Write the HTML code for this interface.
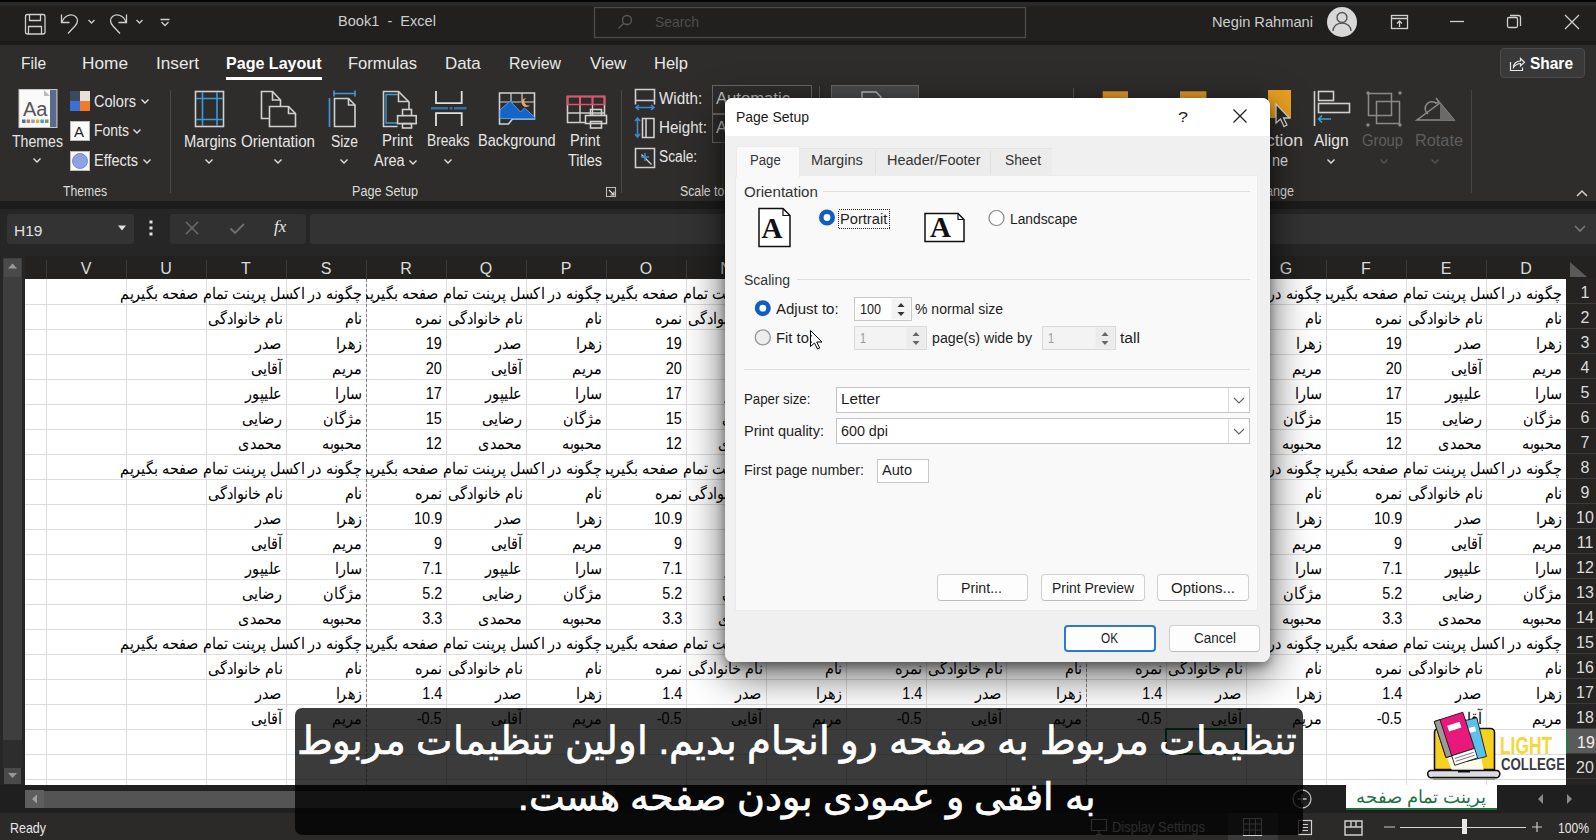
<!DOCTYPE html><html><head><meta charset="utf-8"><style>
*{margin:0;padding:0;box-sizing:border-box}
html,body{width:1596px;height:840px;overflow:hidden;background:#292929;font-family:"Liberation Sans",sans-serif;}
.a{position:absolute}
.t{position:absolute;white-space:nowrap;line-height:1}
.c{position:absolute;height:28px;overflow:hidden;white-space:nowrap;direction:rtl;text-align:right;padding-right:4px;font-size:16px;line-height:29px;color:#000}.c>i{font-style:normal;display:inline-block;transform:scaleX(0.9);transform-origin:100% 50%}
.ch{position:absolute;top:256px;height:23px;width:80px;text-align:center;color:#dcdcdc;font-size:16px;line-height:25px}
.rh{position:absolute;left:1566px;width:30px;padding-left:8px;height:25px;text-align:center;color:#dcdcdc;font-size:16px;line-height:28px;border-bottom:1px solid #3a3a3a}
</style></head><body>
<div class="a" style="left:0;top:0;width:1596px;height:45px;background:#21201f"></div><div class="a" style="left:0;top:41px;width:1596px;height:4px;background:#1c1b1a"></div>
<div class="a" style="left:0;top:0;width:1596px;height:5.5px;background:#2a2a2a"></div><div class="a" style="left:0;top:0;width:1596px;height:1.5px;background:#050505"></div>
<div class="a" style="left:0;top:45px;width:1596px;height:156px;background:#2e2d2b"></div>
<div class="a" style="left:0;top:201px;width:1596px;height:55px;background:#262626"></div><div class="a" style="left:0;top:201px;width:1596px;height:8px;background:#1c1c1c"></div>
<div class="a" style="left:0;top:256px;width:1596px;height:23px;background:#232221"></div><div class="a" style="left:1566px;top:279px;width:30px;height:506px;background:#252422"></div>
<div class="a" style="left:25px;top:279px;width:1541px;height:506px;background:#fff"></div>
<div class="a" style="left:0;top:785px;width:1596px;height:28px;background:#1f1f1f"></div>
<div class="a" style="left:0;top:813px;width:1596px;height:27px;background:#2b2a29"></div>
<svg class="a" style="left:0;top:0" width="1596" height="42" viewBox="0 0 1596 42">
<g fill="none" stroke="#cfcfcf" stroke-width="1.3">
<rect x="25.5" y="14.5" width="19.5" height="19.5" rx="2"/><path d="M29.5 14.5v6h11v-6"/><path d="M28.5 34v-7.5h13v7.5"/>
<path d="M61.5 14.5v8h8"/><path d="M62 22c2.5-6.5 9-9 13.5-5.5c3 2.5 2.5 6-0.5 9.5l-7 7.5"/>
<path d="M88.5 20l3 3 3-3"/>
<path d="M126.5 14.5v8h-8"/><path d="M126 22c-2.5-6.5-9-9-13.5-5.5c-3 2.5-2.5 6 0.5 9.5l7 7.5"/>
<path d="M136.5 20l3 3 3-3"/>
<path d="M160.5 19.5h9M161.5 22l3.5 3.5 3.5-3.5"/>
<rect x="594.5" y="7.5" width="431" height="30" stroke="#4c4c4c"/>
<circle cx="627" cy="20" r="4.5" stroke="#5a5a5a"/><path d="M623.5 23.5l-5 5" stroke="#5a5a5a"/>
<rect x="1391.5" y="15.5" width="16" height="13" stroke="#cfcfcf"/><path d="M1391.5 18.5h16M1399.5 27v-6M1397 23.5l2.5-2.5 2.5 2.5"/>
<path d="M1450 21.5h14"/>
<rect x="1507.5" y="17.5" width="10" height="10" rx="1.5"/><path d="M1510 15.5h8.5a2 2 0 0 1 2 2v8.5"/>
<path d="M1565 15l14 14M1579 15l-14 14"/>
</g>
<circle cx="1342" cy="22" r="15" fill="#d8d8d8"/>
<g fill="none" stroke="#555" stroke-width="1.4"><circle cx="1342" cy="17.5" r="5"/><path d="M1333 31a9 8 0 0 1 18 0"/></g>
</svg>
<div class="t" style="left:338px;top:13.1px;font-size:15px;color:#cdcdcd;transform-origin:0 0;transform:scaleX(0.971);white-space:pre;">Book1  -  Excel</div>
<div class="t" style="left:655px;top:14.3px;font-size:15px;color:#4e4e4e;transform-origin:0 0;transform:scaleX(0.926);white-space:pre;">Search</div>
<div class="t" style="left:1212.3px;top:14.3px;font-size:15px;color:#cdcdcd;transform-origin:0 0;transform:scaleX(0.977);white-space:pre;">Negin Rahmani</div>
<div class="t" style="left:21px;top:54.6px;font-size:17px;color:#e8e8e8;transform-origin:0 0;transform:scaleX(0.913);white-space:pre;">File</div>
<div class="t" style="left:82px;top:54.6px;font-size:17px;color:#e8e8e8;transform-origin:0 0;transform:scaleX(1.014);white-space:pre;">Home</div>
<div class="t" style="left:156px;top:54.6px;font-size:17px;color:#e8e8e8;transform-origin:0 0;transform:scaleX(1.011);white-space:pre;">Insert</div>
<div class="t" style="left:348px;top:54.6px;font-size:17px;color:#e8e8e8;transform-origin:0 0;transform:scaleX(0.974);white-space:pre;">Formulas</div>
<div class="t" style="left:445px;top:54.6px;font-size:17px;color:#e8e8e8;transform-origin:0 0;transform:scaleX(0.994);white-space:pre;">Data</div>
<div class="t" style="left:509px;top:54.6px;font-size:17px;color:#e8e8e8;transform-origin:0 0;transform:scaleX(0.933);white-space:pre;">Review</div>
<div class="t" style="left:589.7px;top:54.6px;font-size:17px;color:#e8e8e8;transform-origin:0 0;transform:scaleX(0.993);white-space:pre;">View</div>
<div class="t" style="left:654px;top:54.6px;font-size:17px;color:#e8e8e8;transform-origin:0 0;transform:scaleX(0.972);white-space:pre;">Help</div>
<div class="t" style="left:226px;top:54.6px;font-size:17px;color:#fff;transform-origin:0 0;transform:scaleX(0.945);white-space:pre;font-weight:bold;">Page Layout</div>
<div class="a" style="left:226px;top:77px;width:96px;height:3px;background:#fff"></div>
<div class="a" style="left:1500px;top:48px;width:85px;height:30px;background:#393939;border:1px solid #4a4a4a;border-radius:4px"></div>
<div class="t" style="left:1530px;top:54.6px;font-size:17px;color:#fff;transform-origin:0 0;transform:scaleX(0.910);white-space:pre;font-weight:bold;">Share</div>
<svg class="a" style="left:1508px;top:54px" width="18" height="18" viewBox="0 0 18 18"><g fill="none" stroke="#e8e8e8" stroke-width="1.2"><path d="M2.5 8v8.5h12v-3"/><path d="M5.5 13.5c0-4 3-6.5 7-6.5V4.5l4 3.8-4 3.7V9.5c-3 0-5 1.2-7 4z"/></g></svg>
<svg class="a" style="left:0;top:0" width="1270" height="205" viewBox="0 0 1270 205"><rect x="19" y="89.5" width="38" height="38" fill="#fafafa" stroke="#c8c8c8"/><path d="M50 90v37h6.5V90z" fill="#5b6a8c"/><path d="M44 90l6 6h-6z" fill="#bbb"/><text x="23" y="116" font-family="Liberation Sans" font-size="20" fill="#555">Aa</text><rect x="22.0" y="119.5" width="3.5" height="3.5" fill="#4a6fb5"/><rect x="26.6" y="119.5" width="3.5" height="3.5" fill="#c0804a"/><rect x="31.2" y="119.5" width="3.5" height="3.5" fill="#9aa0b0"/><rect x="35.8" y="119.5" width="3.5" height="3.5" fill="#e0b030"/><rect x="40.4" y="119.5" width="3.5" height="3.5" fill="#4aa0c0"/><rect x="45.0" y="119.5" width="3.5" height="3.5" fill="#7a9a60"/><path d="M33.5 158.5l3.5 3.5 3.5-3.5" stroke="#e0e0e0" stroke-width="1.4" fill="none"/><rect x="70" y="91" width="10" height="10" fill="#3c4a5e"/><rect x="80" y="91" width="10" height="10" fill="#e6e2da"/><rect x="70" y="101" width="10" height="10" fill="#3d6fd6"/><rect x="80" y="101" width="10" height="10" fill="#f07c2a"/><path d="M141.5 99.5l3.5 3.5 3.5-3.5" stroke="#e6e6e6" stroke-width="1.4" fill="none"/><rect x="70.5" y="121.5" width="19" height="19" fill="#fafafa" stroke="#bbb"/><text x="74" y="137" font-family="Liberation Sans" font-size="15" fill="#222">A</text><path d="M133.5 129.5l3.5 3.5 3.5-3.5" stroke="#e0e0e0" stroke-width="1.4" fill="none"/><rect x="70.5" y="151.5" width="19" height="19" fill="#fafafa" stroke="#bbb"/><circle cx="80" cy="161" r="7.5" fill="#8ea2e2" stroke="#7a8cd0"/><path d="M143.5 159.5l3.5 3.5 3.5-3.5" stroke="#e0e0e0" stroke-width="1.4" fill="none"/><path d="M170.5 90v103" stroke="#4a4a4a"/><rect x="195.5" y="91.5" width="28" height="35" fill="none" stroke="#d0d0d0" stroke-width="1.6"/><path d="M202.5 92v34M217 92v34M196 98.5h27M196 119.5h27" fill="none" stroke="#3a9be0" stroke-width="1.6"/><path d="M205.5 159.5l3.5 3.5 3.5-3.5" stroke="#e0e0e0" stroke-width="1.4" fill="none"/><path d="M269.5 118.5h-8v-27h11l8 8.5v6.5" fill="none" stroke="#d0d0d0" stroke-width="1.6"/><path d="M272.5 91.5v8.5h8" fill="none" stroke="#d0d0d0" stroke-width="1.6"/><path d="M269.5 106.5h19l7 7v13h-26z" fill="none" stroke="#d0d0d0" stroke-width="1.6"/><path d="M288.5 106.5v7h7" fill="none" stroke="#d0d0d0" stroke-width="1.6"/><path d="M274.5 159.5l3.5 3.5 3.5-3.5" stroke="#e0e0e0" stroke-width="1.4" fill="none"/><path d="M334.5 98.5h14l6.5 6.5v21.5h-20.5z" fill="none" stroke="#d0d0d0" stroke-width="1.6"/><path d="M348.5 98.5v6.5h6.5" fill="none" stroke="#d0d0d0" stroke-width="1.6"/><path d="M334 93.5h21M334 90.5v6M355 90.5v6M329.5 98v29" fill="none" stroke="#3a9be0" stroke-width="1.6"/><path d="M340.5 159.5l3.5 3.5 3.5-3.5" stroke="#e0e0e0" stroke-width="1.4" fill="none"/><path d="M397.5 126.5h-14v-35h15l10.5 10.5v7.5" fill="none" stroke="#d0d0d0" stroke-width="1.6"/><path d="M398.5 91.5v10h10.5" fill="none" stroke="#d0d0d0" stroke-width="1.6"/><path d="M398 94.5h-12v28.5h11" stroke="#3a9be0" stroke-width="1.3" fill="none"/><rect x="402.5" y="109.5" width="9" height="6.2" fill="none" stroke="#d0d0d0" stroke-width="1.6"/><rect x="397.6" y="115.7" width="18.6" height="7.9" fill="#2e2d2b" stroke="#d0d0d0" stroke-width="1.6"/><rect x="402.5" y="123.6" width="9" height="4.4" fill="none" stroke="#d0d0d0" stroke-width="1.6"/><path d="M409.5 160.5l3.5 3.5 3.5-3.5" stroke="#e0e0e0" stroke-width="1.4" fill="none"/><path d="M436 91v12.2h25.7V91M436 126v-12.8h25.7V126" fill="none" stroke="#e0e0e0" stroke-width="1.8"/><path d="M431 108.2h35.5" stroke="#2f6fa8" stroke-width="2.6" stroke-dasharray="17 1.5 3 1.5 14"/><path d="M444.5 159.5l3.5 3.5 3.5-3.5" stroke="#e0e0e0" stroke-width="1.4" fill="none"/><path d="M499.5 124v-31h35v26h-22l-4 5z" fill="none" stroke="#d0d0d0" stroke-width="1.6"/><path d="M499.5 102h35M511 93v8M522 93v8" stroke="#d0d0d0" stroke-width="1.2"/><path d="M500 110l10-9 10.5 11 4-4 10 9v1.6h-34.5z" fill="#1565c8" stroke="#4aa0f0" stroke-width="1"/><path d="M526.5 98a4.5 4.5 0 1 0 3.5 7a3.5 3.5 0 0 1-3.5-7z" fill="#f0a860"/><path d="M567.5 96.5h37v26h-37z" fill="none" stroke="#d0d0d0" stroke-width="1.6"/><path d="M580 96.5v26M592.5 96.5v26M567.5 113h37" stroke="#d0d0d0" stroke-width="1.4"/><path d="M567.5 96.5h37v8h-37z" fill="none" stroke="#f04a6a" stroke-width="1.6"/><path d="M580 96.5v8M592.5 96.5v8" stroke="#f04a6a" stroke-width="1.6"/><rect x="590.5" y="109.5" width="11" height="6" fill="none" stroke="#d0d0d0" stroke-width="1.6"/><rect x="585.5" y="115.5" width="21" height="8" fill="#2e2d2b" stroke="#d0d0d0" stroke-width="1.6"/><rect x="590.5" y="121.5" width="11" height="6.5" fill="none" stroke="#d0d0d0" stroke-width="1.6"/><path d="M606.5 187.5h9v9h-9z" fill="none" stroke="#bbb" stroke-width="1.1"/><path d="M609 190l5 5M614 191.5v3.5h-3.5" fill="none" stroke="#ddd" stroke-width="1.1"/><path d="M621.5 90v103" stroke="#4a4a4a"/><path d="M635.5 89.5h19v11h-19zM635.5 100.5v4M654.5 100.5v4" fill="none" stroke="#d0d0d0" stroke-width="1.6"/><path d="M636 107.5h18M639 105l-3 2.5 3 2.5M651 105l3 2.5-3 2.5" stroke="#3a8ad0" stroke-width="1.6" fill="none"/><path d="M642.5 118.5h11.5v19h-11.5zM646 118.5v19" fill="none" stroke="#d0d0d0" stroke-width="1.6"/><path d="M637.5 118v19M635 121l2.5-3 2.5 3M635 134l2.5 3 2.5-3" stroke="#3a8ad0" stroke-width="1.6" fill="none"/><path d="M635.5 148.5h19v19h-19z" fill="none" stroke="#d0d0d0" stroke-width="1.6"/><path d="M641.5 154.5l10 10" stroke="#d0d0d0" stroke-width="1.3"/><path d="M645 153v8M641 157h8" stroke="#3a8ad0" stroke-width="1.6"/><path d="M712.5 86v27.5h12M712.5 113.5v29h12" fill="none" stroke="#555"/><rect x="712.5" y="85.5" width="99" height="28" fill="none" stroke="#666"/><rect x="712.5" y="114.5" width="99" height="28" fill="none" stroke="#666"/><path d="M819.5 86v20" stroke="#555"/><rect x="831.5" y="85.5" width="87" height="20" fill="#4a4a4a" stroke="#6a6a6a"/><path d="M862 104v-12h14l5 5v7" fill="none" stroke="#bbb" stroke-width="1.4"/><path d="M1073.5 88v20" stroke="#555"/><rect x="1102.7" y="91.3" width="25.3" height="12" fill="#e39a2a"/><rect x="1180" y="91.3" width="26.4" height="12" fill="#e39a2a"/><path d="M722.5 120v78" stroke="#3a3a3a"/></svg>
<div class="t" style="left:12px;top:133.5px;font-size:16px;color:#e6e6e6;transform-origin:0 0;transform:scaleX(0.882);white-space:pre;">Themes</div>
<div class="t" style="left:94px;top:93.5px;font-size:16px;color:#e6e6e6;transform-origin:0 0;transform:scaleX(0.908);white-space:pre;">Colors</div>
<div class="t" style="left:94px;top:123.1px;font-size:16px;color:#e6e6e6;transform-origin:0 0;transform:scaleX(0.875);white-space:pre;">Fonts</div>
<div class="t" style="left:94px;top:153.1px;font-size:16px;color:#e6e6e6;transform-origin:0 0;transform:scaleX(0.905);white-space:pre;">Effects</div>
<div class="t" style="left:63px;top:183.8px;font-size:14px;color:#dcdcdc;transform-origin:0 0;transform:scaleX(0.870);white-space:pre;">Themes</div>
<div class="t" style="left:183.6px;top:133.5px;font-size:16px;color:#e6e6e6;transform-origin:0 0;transform:scaleX(0.921);white-space:pre;">Margins</div>
<div class="t" style="left:241.4px;top:133.5px;font-size:16px;color:#e6e6e6;transform-origin:0 0;transform:scaleX(0.945);white-space:pre;">Orientation</div>
<div class="t" style="left:331px;top:133.5px;font-size:16px;color:#e6e6e6;transform-origin:0 0;transform:scaleX(0.867);white-space:pre;">Size</div>
<div class="t" style="left:382px;top:133.2px;font-size:16px;color:#e6e6e6;transform-origin:0 0;transform:scaleX(0.933);white-space:pre;">Print</div>
<div class="t" style="left:374px;top:153.2px;font-size:16px;color:#e6e6e6;transform-origin:0 0;transform:scaleX(0.902);white-space:pre;">Area</div>
<div class="t" style="left:427px;top:133.2px;font-size:16px;color:#e6e6e6;transform-origin:0 0;transform:scaleX(0.857);white-space:pre;">Breaks</div>
<div class="t" style="left:477.5px;top:133.2px;font-size:16px;color:#e6e6e6;transform-origin:0 0;transform:scaleX(0.908);white-space:pre;">Background</div>
<div class="t" style="left:570px;top:133.2px;font-size:16px;color:#e6e6e6;transform-origin:0 0;transform:scaleX(0.912);white-space:pre;">Print</div>
<div class="t" style="left:567.5px;top:153.2px;font-size:16px;color:#e6e6e6;transform-origin:0 0;transform:scaleX(0.906);white-space:pre;">Titles</div>
<div class="t" style="left:352px;top:183.8px;font-size:14px;color:#dcdcdc;transform-origin:0 0;transform:scaleX(0.902);white-space:pre;">Page Setup</div>
<div class="t" style="left:658.9px;top:91.2px;font-size:16px;color:#e6e6e6;transform-origin:0 0;transform:scaleX(0.951);white-space:pre;">Width:</div>
<div class="t" style="left:658.9px;top:119.8px;font-size:16px;color:#e6e6e6;transform-origin:0 0;transform:scaleX(0.947);white-space:pre;">Height:</div>
<div class="t" style="left:658.9px;top:149.1px;font-size:16px;color:#e6e6e6;transform-origin:0 0;transform:scaleX(0.857);white-space:pre;">Scale:</div>
<div class="t" style="left:716px;top:91.2px;font-size:16px;color:#bfbfbf;transform-origin:0 0;transform:scaleX(1.040);white-space:pre;">Automatic</div>
<div class="t" style="left:716px;top:119.8px;font-size:16px;color:#bfbfbf;transform-origin:0 0;transform:scaleX(1.031);white-space:pre;">A</div>
<div class="t" style="left:679.7px;top:183.8px;font-size:14px;color:#dcdcdc;transform-origin:0 0;transform:scaleX(0.876);white-space:pre;">Scale to</div>
<svg class="a" style="left:0;top:0" width="1596" height="205" viewBox="0 0 1596 205"><rect x="1268" y="90" width="23" height="28" fill="#e8a020"/><path d="M1276 104l0 19 4.5-4 3.5 7.5 3-1.5-3.5-7 6 0z" fill="#2a2a2a" stroke="#d8d8d8" stroke-width="1.3"/><path d="M1314.5 91v35" stroke="#d0d0d0" stroke-width="1.6"/><rect x="1318.5" y="91.5" width="15" height="9" fill="none" stroke="#d0d0d0" stroke-width="1.6"/><rect x="1318.5" y="103.5" width="31" height="9" fill="none" stroke="#d0d0d0" stroke-width="1.6"/><path d="M1331 119h-12M1322 115.5l-3.5 3.5 3.5 3.5" stroke="#3a9be0" stroke-width="1.6" fill="none"/><path d="M1327.5 159.5l3.5 3.5 3.5-3.5" stroke="#e0e0e0" stroke-width="1.4" fill="none"/><rect x="1368.5" y="93.5" width="23" height="22" fill="none" stroke="#8a8a8a" stroke-width="1.5"/><rect x="1376.5" y="101.5" width="23" height="22" fill="none" stroke="#8a8a8a" stroke-width="1.5"/><circle cx="1368" cy="93" r="1.7" fill="#8a8a8a"/><circle cx="1400" cy="93" r="1.7" fill="#8a8a8a"/><circle cx="1368" cy="125" r="1.7" fill="#8a8a8a"/><circle cx="1400" cy="125" r="1.7" fill="#8a8a8a"/><path d="M1417 120h37l-14-17z" fill="none" stroke="#8a8a8a" stroke-width="1.5"/><path d="M1440 103v17h14z" fill="#6a6a6a"/><path d="M1428 114a6 6 0 1 1 8-11M1436 98l3 4-4 1.5" fill="none" stroke="#8a8a8a" stroke-width="1.5"/><path d="M1471.5 90v103" stroke="#444"/><path d="M1577 196l5-5 5 5" fill="none" stroke="#d0d0d0" stroke-width="1.5"/></svg>
<div class="t" style="left:1265.7px;top:133.4px;font-size:16px;color:#e6e6e6;transform-origin:0 0;transform:scaleX(1.092);white-space:pre;">ction</div>
<div class="t" style="left:1272px;top:153.1px;font-size:16px;color:#e6e6e6;transform-origin:0 0;transform:scaleX(0.899);white-space:pre;">ne</div>
<div class="t" style="left:1266px;top:183.8px;font-size:14px;color:#dcdcdc;transform-origin:0 0;transform:scaleX(0.899);white-space:pre;">ange</div>
<div class="t" style="left:1314px;top:133.4px;font-size:16px;color:#e6e6e6;transform-origin:0 0;transform:scaleX(0.972);white-space:pre;">Align</div>
<div class="t" style="left:1362px;top:133.4px;font-size:16px;color:#5e5e5e;transform-origin:0 0;transform:scaleX(0.922);white-space:pre;">Group</div>
<div class="t" style="left:1415px;top:133.4px;font-size:16px;color:#5e5e5e;transform-origin:0 0;transform:scaleX(1.018);white-space:pre;">Rotate</div>
<svg class='a' style='left:0;top:0' width='1596' height='205'><path d="M1380.5 159.5l3.5 3.5 3.5-3.5" stroke="#555" stroke-width="1.4" fill="none"/><path d="M1431.5 159.5l3.5 3.5 3.5-3.5" stroke="#555" stroke-width="1.4" fill="none"/></svg>
<div class="a" style="left:7px;top:213.5px;width:127px;height:30px;background:#333;border-radius:3px"></div>
<div class="t" style="left:13.6px;top:222.6px;font-size:15px;color:#e0e0e0;transform-origin:0 0;transform:scaleX(1.032);white-space:pre;">H19</div>
<svg class="a" style="left:0;top:200px" width="330" height="58" viewBox="0 200 330 58"><path d="M118 225.5h8l-4 5z" fill="#e0e0e0"/><rect x="149.5" y="220.5" width="3" height="3" fill="#e0e0e0"/><rect x="149.5" y="226.5" width="3" height="3" fill="#e0e0e0"/><rect x="149.5" y="232.5" width="3" height="3" fill="#e0e0e0"/><path d="M186 222l12 12M198 222l-12 12" stroke="#6a6a6a" stroke-width="1.6"/><path d="M230 228.5l4.5 4.5 9-9" stroke="#6a6a6a" stroke-width="1.8" fill="none"/></svg>
<div class="a" style="left:170px;top:213.5px;width:136px;height:30px;background:#313131;border-radius:3px"></div>
<svg class="a" style="left:170px;top:213px" width="136" height="31" viewBox="170 213 136 31"><path d="M186 222l12 12M198 222l-12 12" stroke="#6a6a6a" stroke-width="1.6"/><path d="M230.5 228.5l4.5 4.5 9-9" stroke="#707070" stroke-width="1.8" fill="none"/></svg>
<div class="t" style="left:274px;top:218px;font-size:17px;color:#e8e8e8;font-family:'Liberation Serif',serif;font-style:italic">fx</div>
<div class="a" style="left:310px;top:213.5px;width:1286px;height:30px;background:#333;border-radius:3px 0 0 3px"></div>
<svg class="a" style="left:1570px;top:220px" width="20" height="16"><path d="M5 6l5 5 5-5" stroke="#777" stroke-width="1.6" fill="none"/></svg>
<div class="a" style="left:0;top:256px;width:25px;height:529px;background:#262626"></div>
<div class="a" style="left:3px;top:258px;width:19px;height:482px;background:#3e3e3e"></div>
<div class="a" style="left:3px;top:740px;width:19px;height:28px;background:#2d2d2d"></div>
<div class="a" style="left:4px;top:259px;width:17px;height:18px;background:#4a4a4a"></div>
<div class="a" style="left:4px;top:768px;width:17px;height:16px;background:#4a4a4a"></div>
<svg class="a" style="left:0;top:255px" width="25" height="535"><path d="M8 13.5h9l-4.5-5z" fill="#999"/><path d="M8 518h9l-4.5 5z" fill="#999"/></svg>
<svg class="a" style="left:1566px;top:258px" width="30" height="21"><path d="M4 19h17l-17-15z" fill="#5a5a5a"/></svg>
<div class="a" style="left:25px;top:791px;width:590px;height:17px;background:#545454"></div>
<div class="a" style="left:25px;top:790px;width:19px;height:18px;background:#5e5e5e"></div>
<svg class="a" style="left:25px;top:790px" width="20" height="18"><path d="M12 4.5v9l-5-4.5z" fill="#a0a0a0"/></svg>
<div class="a" style="left:1345.6px;top:785px;width:151px;height:25px;background:#fff;border-bottom:2.5px solid #1d6b3e"></div>
<div class="a" style="left:1345.6px;top:785px;width:151px;height:25px;line-height:24px;font-size:18px;color:#1d7344;text-align:center;direction:rtl">پرینت تمام صفحه</div>
<svg class="a" style="left:1280px;top:785px" width="316" height="55" viewBox="1280 785 316 55"><circle cx="1302" cy="799" r="9" fill="none" stroke="#bdbdbd" stroke-width="1.3"/><path d="M1297.5 799h9M1302 794.5v9" stroke="#bdbdbd" stroke-width="1.3"/><path d="M1543 794v10l-5-5z" fill="#8a8a8a"/><path d="M1567 794v10l5-5z" fill="#8a8a8a"/><rect x="1298.5" y="820.5" width="13" height="14" fill="none" stroke="#d0d0d0" stroke-width="1.2"/><path d="M1302 824.5h6M1302 827.5h6M1302 830.5h6" stroke="#d0d0d0" stroke-width="1.2"/><path d="M1345 835v-14h17v14zM1351 821v6M1356 821v6M1345 827h17" fill="none" stroke="#d0d0d0" stroke-width="1.4"/><path d="M1384 827h11M1532 827h10M1537 822v10" stroke="#c8c8c8" stroke-width="1.2"/><path d="M1400 827.5h126" stroke="#d8d8d8" stroke-width="1.2"/><rect x="1462" y="819" width="5" height="15" fill="#e8e8e8"/></svg>
<svg class="a" style="left:1220px;top:812px" width="80" height="28" viewBox="1220 812 80 28"><rect x="1228" y="813" width="50" height="27" fill="#3a3a3a"/><path d="M1243.5 818.5h18v17h-18zM1249.5 818.5v17M1255.5 818.5v17M1243.5 824h18M1243.5 830h18" fill="none" stroke="#cfcfcf" stroke-width="1.1"/></svg>
<div class="t" style="left:10px;top:820.3px;font-size:15px;color:#e6e6e6;transform-origin:0 0;transform:scaleX(0.830);white-space:pre;">Ready</div>
<div class="t" style="left:1112px;top:820.1px;font-size:14px;color:#bdbdbd;transform-origin:0 0;transform:scaleX(0.926);white-space:pre;">Display Settings</div>
<svg class="a" style="left:1088px;top:815px" width="22" height="25"><path d="M3.5 4.5h15v11h-15zM8 19.5h6M11 15.5v4" fill="none" stroke="#bdbdbd" stroke-width="1.2"/></svg>
<div class="t" style="left:1558px;top:821.1px;font-size:14px;color:#e6e6e6;transform-origin:0 0;transform:scaleX(0.866);white-space:pre;">100%</div>
<div class="ch" style="left:1486px">D</div>
<div class="ch" style="left:1406px">E</div>
<div class="ch" style="left:1326px">F</div>
<div class="ch" style="left:1246px">G</div>
<div class="ch" style="left:1166px">H</div>
<div class="ch" style="left:1086px">I</div>
<div class="ch" style="left:1006px">J</div>
<div class="ch" style="left:926px">K</div>
<div class="ch" style="left:846px">L</div>
<div class="ch" style="left:766px">M</div>
<div class="ch" style="left:686px">N</div>
<div class="ch" style="left:606px">O</div>
<div class="ch" style="left:526px">P</div>
<div class="ch" style="left:446px">Q</div>
<div class="ch" style="left:366px">R</div>
<div class="ch" style="left:286px">S</div>
<div class="ch" style="left:206px">T</div>
<div class="ch" style="left:126px">U</div>
<div class="ch" style="left:46px">V</div>
<div class="a" style="left:1486px;top:260px;width:1px;height:19px;background:#3a3a3a"></div><div class="a" style="left:1406px;top:260px;width:1px;height:19px;background:#3a3a3a"></div><div class="a" style="left:1326px;top:260px;width:1px;height:19px;background:#3a3a3a"></div><div class="a" style="left:1246px;top:260px;width:1px;height:19px;background:#3a3a3a"></div><div class="a" style="left:1166px;top:260px;width:1px;height:19px;background:#3a3a3a"></div><div class="a" style="left:1086px;top:260px;width:1px;height:19px;background:#3a3a3a"></div><div class="a" style="left:1006px;top:260px;width:1px;height:19px;background:#3a3a3a"></div><div class="a" style="left:926px;top:260px;width:1px;height:19px;background:#3a3a3a"></div><div class="a" style="left:846px;top:260px;width:1px;height:19px;background:#3a3a3a"></div><div class="a" style="left:766px;top:260px;width:1px;height:19px;background:#3a3a3a"></div><div class="a" style="left:686px;top:260px;width:1px;height:19px;background:#3a3a3a"></div><div class="a" style="left:606px;top:260px;width:1px;height:19px;background:#3a3a3a"></div><div class="a" style="left:526px;top:260px;width:1px;height:19px;background:#3a3a3a"></div><div class="a" style="left:446px;top:260px;width:1px;height:19px;background:#3a3a3a"></div><div class="a" style="left:366px;top:260px;width:1px;height:19px;background:#3a3a3a"></div><div class="a" style="left:286px;top:260px;width:1px;height:19px;background:#3a3a3a"></div><div class="a" style="left:206px;top:260px;width:1px;height:19px;background:#3a3a3a"></div><div class="a" style="left:126px;top:260px;width:1px;height:19px;background:#3a3a3a"></div><div class="a" style="left:46px;top:260px;width:1px;height:19px;background:#3a3a3a"></div><div class="a" style="left:-34px;top:260px;width:1px;height:19px;background:#3a3a3a"></div>
<div class="a" style="left:1486px;top:279px;width:1px;height:506px;background:#dcdcdc"></div><div class="a" style="left:1406px;top:279px;width:1px;height:506px;background:#dcdcdc"></div><div class="a" style="left:1326px;top:279px;width:1px;height:506px;background:#dcdcdc"></div><div class="a" style="left:1246px;top:279px;width:1px;height:506px;background:#dcdcdc"></div><div class="a" style="left:1166px;top:279px;width:1px;height:506px;background:#dcdcdc"></div><div class="a" style="left:1086px;top:279px;width:1px;height:506px;background:#dcdcdc"></div><div class="a" style="left:1006px;top:279px;width:1px;height:506px;background:#dcdcdc"></div><div class="a" style="left:926px;top:279px;width:1px;height:506px;background:#dcdcdc"></div><div class="a" style="left:846px;top:279px;width:1px;height:506px;background:#dcdcdc"></div><div class="a" style="left:766px;top:279px;width:1px;height:506px;background:#dcdcdc"></div><div class="a" style="left:686px;top:279px;width:1px;height:506px;background:#dcdcdc"></div><div class="a" style="left:606px;top:279px;width:1px;height:506px;background:#dcdcdc"></div><div class="a" style="left:526px;top:279px;width:1px;height:506px;background:#dcdcdc"></div><div class="a" style="left:446px;top:279px;width:1px;height:506px;background:#dcdcdc"></div><div class="a" style="left:366px;top:279px;width:1px;height:506px;background:#dcdcdc"></div><div class="a" style="left:286px;top:279px;width:1px;height:506px;background:#dcdcdc"></div><div class="a" style="left:206px;top:279px;width:1px;height:506px;background:#dcdcdc"></div><div class="a" style="left:126px;top:279px;width:1px;height:506px;background:#dcdcdc"></div><div class="a" style="left:46px;top:279px;width:1px;height:506px;background:#dcdcdc"></div><div class="a" style="left:-34px;top:279px;width:1px;height:506px;background:#dcdcdc"></div><div class="a" style="left:25px;top:304px;width:1541px;height:1px;background:#dcdcdc"></div><div class="a" style="left:25px;top:329px;width:1541px;height:1px;background:#dcdcdc"></div><div class="a" style="left:25px;top:354px;width:1541px;height:1px;background:#dcdcdc"></div><div class="a" style="left:25px;top:379px;width:1541px;height:1px;background:#dcdcdc"></div><div class="a" style="left:25px;top:404px;width:1541px;height:1px;background:#dcdcdc"></div><div class="a" style="left:25px;top:429px;width:1541px;height:1px;background:#dcdcdc"></div><div class="a" style="left:25px;top:454px;width:1541px;height:1px;background:#dcdcdc"></div><div class="a" style="left:25px;top:479px;width:1541px;height:1px;background:#dcdcdc"></div><div class="a" style="left:25px;top:504px;width:1541px;height:1px;background:#dcdcdc"></div><div class="a" style="left:25px;top:529px;width:1541px;height:1px;background:#dcdcdc"></div><div class="a" style="left:25px;top:554px;width:1541px;height:1px;background:#dcdcdc"></div><div class="a" style="left:25px;top:579px;width:1541px;height:1px;background:#dcdcdc"></div><div class="a" style="left:25px;top:604px;width:1541px;height:1px;background:#dcdcdc"></div><div class="a" style="left:25px;top:629px;width:1541px;height:1px;background:#dcdcdc"></div><div class="a" style="left:25px;top:654px;width:1541px;height:1px;background:#dcdcdc"></div><div class="a" style="left:25px;top:679px;width:1541px;height:1px;background:#dcdcdc"></div><div class="a" style="left:25px;top:704px;width:1541px;height:1px;background:#dcdcdc"></div><div class="a" style="left:25px;top:729px;width:1541px;height:1px;background:#dcdcdc"></div><div class="a" style="left:25px;top:754px;width:1541px;height:1px;background:#dcdcdc"></div><div class="a" style="left:25px;top:779px;width:1541px;height:1px;background:#dcdcdc"></div>
<div class="a" style="left:366px;top:279px;width:1px;height:506px;background:repeating-linear-gradient(#888 0 3px,transparent 3px 5px)"></div>
<div class="a" style="left:1086px;top:279px;width:1px;height:506px;background:repeating-linear-gradient(#888 0 3px,transparent 3px 5px)"></div>
<div class="rh" style="top:279px;">1</div>
<div class="rh" style="top:304px;">2</div>
<div class="rh" style="top:329px;">3</div>
<div class="rh" style="top:354px;">4</div>
<div class="rh" style="top:379px;">5</div>
<div class="rh" style="top:404px;">6</div>
<div class="rh" style="top:429px;">7</div>
<div class="rh" style="top:454px;">8</div>
<div class="rh" style="top:479px;">9</div>
<div class="rh" style="top:504px;">10</div>
<div class="rh" style="top:529px;">11</div>
<div class="rh" style="top:554px;">12</div>
<div class="rh" style="top:579px;">13</div>
<div class="rh" style="top:604px;">14</div>
<div class="rh" style="top:629px;">15</div>
<div class="rh" style="top:654px;">16</div>
<div class="rh" style="top:679px;">17</div>
<div class="rh" style="top:704px;">18</div>
<div class="rh" style="top:729px;background:#5a5a5a;border-left:2px solid #1e7a45;color:#f0f0f0;">19</div>
<div class="rh" style="top:754px;">20</div>
<div class="c" style="left:1326px;top:279px;width:240px;"><i>چگونه در اکسل پرینت تمام صفحه بگیریم</i></div><div class="c" style="left:1326px;top:454px;width:240px;"><i>چگونه در اکسل پرینت تمام صفحه بگیریم</i></div><div class="c" style="left:1326px;top:629px;width:240px;"><i>چگونه در اکسل پرینت تمام صفحه بگیریم</i></div><div class="c" style="left:1486px;top:304px;width:80px;"><i>نام</i></div><div class="c" style="left:1406px;top:304px;width:80px;"><i>نام خانوادگی</i></div><div class="c" style="left:1326px;top:304px;width:80px;"><i>نمره</i></div><div class="c" style="left:1486px;top:479px;width:80px;"><i>نام</i></div><div class="c" style="left:1406px;top:479px;width:80px;"><i>نام خانوادگی</i></div><div class="c" style="left:1326px;top:479px;width:80px;"><i>نمره</i></div><div class="c" style="left:1486px;top:654px;width:80px;"><i>نام</i></div><div class="c" style="left:1406px;top:654px;width:80px;"><i>نام خانوادگی</i></div><div class="c" style="left:1326px;top:654px;width:80px;"><i>نمره</i></div><div class="c" style="left:1486px;top:329px;width:80px;"><i>زهرا</i></div><div class="c" style="left:1406px;top:329px;width:80px;"><i>صدر</i></div><div class="c" style="left:1486px;top:504px;width:80px;"><i>زهرا</i></div><div class="c" style="left:1406px;top:504px;width:80px;"><i>صدر</i></div><div class="c" style="left:1326px;top:329px;width:80px;"><i>19</i></div><div class="c" style="left:1326px;top:504px;width:80px;"><i>10.9</i></div><div class="c" style="left:1486px;top:354px;width:80px;"><i>مریم</i></div><div class="c" style="left:1406px;top:354px;width:80px;"><i>آقایی</i></div><div class="c" style="left:1486px;top:529px;width:80px;"><i>مریم</i></div><div class="c" style="left:1406px;top:529px;width:80px;"><i>آقایی</i></div><div class="c" style="left:1326px;top:354px;width:80px;"><i>20</i></div><div class="c" style="left:1326px;top:529px;width:80px;"><i>9</i></div><div class="c" style="left:1486px;top:379px;width:80px;"><i>سارا</i></div><div class="c" style="left:1406px;top:379px;width:80px;"><i>علیپور</i></div><div class="c" style="left:1486px;top:554px;width:80px;"><i>سارا</i></div><div class="c" style="left:1406px;top:554px;width:80px;"><i>علیپور</i></div><div class="c" style="left:1326px;top:379px;width:80px;"><i>17</i></div><div class="c" style="left:1326px;top:554px;width:80px;"><i>7.1</i></div><div class="c" style="left:1486px;top:404px;width:80px;"><i>مژگان</i></div><div class="c" style="left:1406px;top:404px;width:80px;"><i>رضایی</i></div><div class="c" style="left:1486px;top:579px;width:80px;"><i>مژگان</i></div><div class="c" style="left:1406px;top:579px;width:80px;"><i>رضایی</i></div><div class="c" style="left:1326px;top:404px;width:80px;"><i>15</i></div><div class="c" style="left:1326px;top:579px;width:80px;"><i>5.2</i></div><div class="c" style="left:1486px;top:429px;width:80px;"><i>محبوبه</i></div><div class="c" style="left:1406px;top:429px;width:80px;"><i>محمدی</i></div><div class="c" style="left:1486px;top:604px;width:80px;"><i>محبوبه</i></div><div class="c" style="left:1406px;top:604px;width:80px;"><i>محمدی</i></div><div class="c" style="left:1326px;top:429px;width:80px;"><i>12</i></div><div class="c" style="left:1326px;top:604px;width:80px;"><i>3.3</i></div><div class="c" style="left:1486px;top:679px;width:80px;"><i>زهرا</i></div><div class="c" style="left:1406px;top:679px;width:80px;"><i>صدر</i></div><div class="c" style="left:1326px;top:679px;width:80px;"><i><span dir="ltr">1.4</span></i></div><div class="c" style="left:1486px;top:704px;width:80px;"><i>مریم</i></div><div class="c" style="left:1406px;top:704px;width:80px;"><i>آقایی</i></div><div class="c" style="left:1326px;top:704px;width:80px;"><i><span dir="ltr">-0.5</span></i></div><div class="c" style="left:1086px;top:279px;width:240px;"><i>چگونه در اکسل پرینت تمام صفحه بگیریم</i></div><div class="c" style="left:1086px;top:454px;width:240px;"><i>چگونه در اکسل پرینت تمام صفحه بگیریم</i></div><div class="c" style="left:1086px;top:629px;width:240px;"><i>چگونه در اکسل پرینت تمام صفحه بگیریم</i></div><div class="c" style="left:1246px;top:304px;width:80px;"><i>نام</i></div><div class="c" style="left:1166px;top:304px;width:80px;"><i>نام خانوادگی</i></div><div class="c" style="left:1086px;top:304px;width:80px;"><i>نمره</i></div><div class="c" style="left:1246px;top:479px;width:80px;"><i>نام</i></div><div class="c" style="left:1166px;top:479px;width:80px;"><i>نام خانوادگی</i></div><div class="c" style="left:1086px;top:479px;width:80px;"><i>نمره</i></div><div class="c" style="left:1246px;top:654px;width:80px;"><i>نام</i></div><div class="c" style="left:1166px;top:654px;width:80px;"><i>نام خانوادگی</i></div><div class="c" style="left:1086px;top:654px;width:80px;"><i>نمره</i></div><div class="c" style="left:1246px;top:329px;width:80px;"><i>زهرا</i></div><div class="c" style="left:1166px;top:329px;width:80px;"><i>صدر</i></div><div class="c" style="left:1246px;top:504px;width:80px;"><i>زهرا</i></div><div class="c" style="left:1166px;top:504px;width:80px;"><i>صدر</i></div><div class="c" style="left:1086px;top:329px;width:80px;"><i>19</i></div><div class="c" style="left:1086px;top:504px;width:80px;"><i>10.9</i></div><div class="c" style="left:1246px;top:354px;width:80px;"><i>مریم</i></div><div class="c" style="left:1166px;top:354px;width:80px;"><i>آقایی</i></div><div class="c" style="left:1246px;top:529px;width:80px;"><i>مریم</i></div><div class="c" style="left:1166px;top:529px;width:80px;"><i>آقایی</i></div><div class="c" style="left:1086px;top:354px;width:80px;"><i>20</i></div><div class="c" style="left:1086px;top:529px;width:80px;"><i>9</i></div><div class="c" style="left:1246px;top:379px;width:80px;"><i>سارا</i></div><div class="c" style="left:1166px;top:379px;width:80px;"><i>علیپور</i></div><div class="c" style="left:1246px;top:554px;width:80px;"><i>سارا</i></div><div class="c" style="left:1166px;top:554px;width:80px;"><i>علیپور</i></div><div class="c" style="left:1086px;top:379px;width:80px;"><i>17</i></div><div class="c" style="left:1086px;top:554px;width:80px;"><i>7.1</i></div><div class="c" style="left:1246px;top:404px;width:80px;"><i>مژگان</i></div><div class="c" style="left:1166px;top:404px;width:80px;"><i>رضایی</i></div><div class="c" style="left:1246px;top:579px;width:80px;"><i>مژگان</i></div><div class="c" style="left:1166px;top:579px;width:80px;"><i>رضایی</i></div><div class="c" style="left:1086px;top:404px;width:80px;"><i>15</i></div><div class="c" style="left:1086px;top:579px;width:80px;"><i>5.2</i></div><div class="c" style="left:1246px;top:429px;width:80px;"><i>محبوبه</i></div><div class="c" style="left:1166px;top:429px;width:80px;"><i>محمدی</i></div><div class="c" style="left:1246px;top:604px;width:80px;"><i>محبوبه</i></div><div class="c" style="left:1166px;top:604px;width:80px;"><i>محمدی</i></div><div class="c" style="left:1086px;top:429px;width:80px;"><i>12</i></div><div class="c" style="left:1086px;top:604px;width:80px;"><i>3.3</i></div><div class="c" style="left:1246px;top:679px;width:80px;"><i>زهرا</i></div><div class="c" style="left:1166px;top:679px;width:80px;"><i>صدر</i></div><div class="c" style="left:1086px;top:679px;width:80px;"><i><span dir="ltr">1.4</span></i></div><div class="c" style="left:1246px;top:704px;width:80px;"><i>مریم</i></div><div class="c" style="left:1166px;top:704px;width:80px;"><i>آقایی</i></div><div class="c" style="left:1086px;top:704px;width:80px;"><i><span dir="ltr">-0.5</span></i></div><div class="c" style="left:846px;top:279px;width:240px;"><i>چگونه در اکسل پرینت تمام صفحه بگیریم</i></div><div class="c" style="left:846px;top:454px;width:240px;"><i>چگونه در اکسل پرینت تمام صفحه بگیریم</i></div><div class="c" style="left:846px;top:629px;width:240px;"><i>چگونه در اکسل پرینت تمام صفحه بگیریم</i></div><div class="c" style="left:1006px;top:304px;width:80px;"><i>نام</i></div><div class="c" style="left:926px;top:304px;width:80px;"><i>نام خانوادگی</i></div><div class="c" style="left:846px;top:304px;width:80px;"><i>نمره</i></div><div class="c" style="left:1006px;top:479px;width:80px;"><i>نام</i></div><div class="c" style="left:926px;top:479px;width:80px;"><i>نام خانوادگی</i></div><div class="c" style="left:846px;top:479px;width:80px;"><i>نمره</i></div><div class="c" style="left:1006px;top:654px;width:80px;"><i>نام</i></div><div class="c" style="left:926px;top:654px;width:80px;"><i>نام خانوادگی</i></div><div class="c" style="left:846px;top:654px;width:80px;"><i>نمره</i></div><div class="c" style="left:1006px;top:329px;width:80px;"><i>زهرا</i></div><div class="c" style="left:926px;top:329px;width:80px;"><i>صدر</i></div><div class="c" style="left:1006px;top:504px;width:80px;"><i>زهرا</i></div><div class="c" style="left:926px;top:504px;width:80px;"><i>صدر</i></div><div class="c" style="left:846px;top:329px;width:80px;"><i>19</i></div><div class="c" style="left:846px;top:504px;width:80px;"><i>10.9</i></div><div class="c" style="left:1006px;top:354px;width:80px;"><i>مریم</i></div><div class="c" style="left:926px;top:354px;width:80px;"><i>آقایی</i></div><div class="c" style="left:1006px;top:529px;width:80px;"><i>مریم</i></div><div class="c" style="left:926px;top:529px;width:80px;"><i>آقایی</i></div><div class="c" style="left:846px;top:354px;width:80px;"><i>20</i></div><div class="c" style="left:846px;top:529px;width:80px;"><i>9</i></div><div class="c" style="left:1006px;top:379px;width:80px;"><i>سارا</i></div><div class="c" style="left:926px;top:379px;width:80px;"><i>علیپور</i></div><div class="c" style="left:1006px;top:554px;width:80px;"><i>سارا</i></div><div class="c" style="left:926px;top:554px;width:80px;"><i>علیپور</i></div><div class="c" style="left:846px;top:379px;width:80px;"><i>17</i></div><div class="c" style="left:846px;top:554px;width:80px;"><i>7.1</i></div><div class="c" style="left:1006px;top:404px;width:80px;"><i>مژگان</i></div><div class="c" style="left:926px;top:404px;width:80px;"><i>رضایی</i></div><div class="c" style="left:1006px;top:579px;width:80px;"><i>مژگان</i></div><div class="c" style="left:926px;top:579px;width:80px;"><i>رضایی</i></div><div class="c" style="left:846px;top:404px;width:80px;"><i>15</i></div><div class="c" style="left:846px;top:579px;width:80px;"><i>5.2</i></div><div class="c" style="left:1006px;top:429px;width:80px;"><i>محبوبه</i></div><div class="c" style="left:926px;top:429px;width:80px;"><i>محمدی</i></div><div class="c" style="left:1006px;top:604px;width:80px;"><i>محبوبه</i></div><div class="c" style="left:926px;top:604px;width:80px;"><i>محمدی</i></div><div class="c" style="left:846px;top:429px;width:80px;"><i>12</i></div><div class="c" style="left:846px;top:604px;width:80px;"><i>3.3</i></div><div class="c" style="left:1006px;top:679px;width:80px;"><i>زهرا</i></div><div class="c" style="left:926px;top:679px;width:80px;"><i>صدر</i></div><div class="c" style="left:846px;top:679px;width:80px;"><i><span dir="ltr">1.4</span></i></div><div class="c" style="left:1006px;top:704px;width:80px;"><i>مریم</i></div><div class="c" style="left:926px;top:704px;width:80px;"><i>آقایی</i></div><div class="c" style="left:846px;top:704px;width:80px;"><i><span dir="ltr">-0.5</span></i></div><div class="c" style="left:606px;top:279px;width:240px;"><i>چگونه در اکسل پرینت تمام صفحه بگیریم</i></div><div class="c" style="left:606px;top:454px;width:240px;"><i>چگونه در اکسل پرینت تمام صفحه بگیریم</i></div><div class="c" style="left:606px;top:629px;width:240px;"><i>چگونه در اکسل پرینت تمام صفحه بگیریم</i></div><div class="c" style="left:766px;top:304px;width:80px;"><i>نام</i></div><div class="c" style="left:686px;top:304px;width:80px;"><i>نام خانوادگی</i></div><div class="c" style="left:606px;top:304px;width:80px;"><i>نمره</i></div><div class="c" style="left:766px;top:479px;width:80px;"><i>نام</i></div><div class="c" style="left:686px;top:479px;width:80px;"><i>نام خانوادگی</i></div><div class="c" style="left:606px;top:479px;width:80px;"><i>نمره</i></div><div class="c" style="left:766px;top:654px;width:80px;"><i>نام</i></div><div class="c" style="left:686px;top:654px;width:80px;"><i>نام خانوادگی</i></div><div class="c" style="left:606px;top:654px;width:80px;"><i>نمره</i></div><div class="c" style="left:766px;top:329px;width:80px;"><i>زهرا</i></div><div class="c" style="left:686px;top:329px;width:80px;"><i>صدر</i></div><div class="c" style="left:766px;top:504px;width:80px;"><i>زهرا</i></div><div class="c" style="left:686px;top:504px;width:80px;"><i>صدر</i></div><div class="c" style="left:606px;top:329px;width:80px;"><i>19</i></div><div class="c" style="left:606px;top:504px;width:80px;"><i>10.9</i></div><div class="c" style="left:766px;top:354px;width:80px;"><i>مریم</i></div><div class="c" style="left:686px;top:354px;width:80px;"><i>آقایی</i></div><div class="c" style="left:766px;top:529px;width:80px;"><i>مریم</i></div><div class="c" style="left:686px;top:529px;width:80px;"><i>آقایی</i></div><div class="c" style="left:606px;top:354px;width:80px;"><i>20</i></div><div class="c" style="left:606px;top:529px;width:80px;"><i>9</i></div><div class="c" style="left:766px;top:379px;width:80px;"><i>سارا</i></div><div class="c" style="left:686px;top:379px;width:80px;"><i>علیپور</i></div><div class="c" style="left:766px;top:554px;width:80px;"><i>سارا</i></div><div class="c" style="left:686px;top:554px;width:80px;"><i>علیپور</i></div><div class="c" style="left:606px;top:379px;width:80px;"><i>17</i></div><div class="c" style="left:606px;top:554px;width:80px;"><i>7.1</i></div><div class="c" style="left:766px;top:404px;width:80px;"><i>مژگان</i></div><div class="c" style="left:686px;top:404px;width:80px;"><i>رضایی</i></div><div class="c" style="left:766px;top:579px;width:80px;"><i>مژگان</i></div><div class="c" style="left:686px;top:579px;width:80px;"><i>رضایی</i></div><div class="c" style="left:606px;top:404px;width:80px;"><i>15</i></div><div class="c" style="left:606px;top:579px;width:80px;"><i>5.2</i></div><div class="c" style="left:766px;top:429px;width:80px;"><i>محبوبه</i></div><div class="c" style="left:686px;top:429px;width:80px;"><i>محمدی</i></div><div class="c" style="left:766px;top:604px;width:80px;"><i>محبوبه</i></div><div class="c" style="left:686px;top:604px;width:80px;"><i>محمدی</i></div><div class="c" style="left:606px;top:429px;width:80px;"><i>12</i></div><div class="c" style="left:606px;top:604px;width:80px;"><i>3.3</i></div><div class="c" style="left:766px;top:679px;width:80px;"><i>زهرا</i></div><div class="c" style="left:686px;top:679px;width:80px;"><i>صدر</i></div><div class="c" style="left:606px;top:679px;width:80px;"><i><span dir="ltr">1.4</span></i></div><div class="c" style="left:766px;top:704px;width:80px;"><i>مریم</i></div><div class="c" style="left:686px;top:704px;width:80px;"><i>آقایی</i></div><div class="c" style="left:606px;top:704px;width:80px;"><i><span dir="ltr">-0.5</span></i></div><div class="c" style="left:366px;top:279px;width:240px;"><i>چگونه در اکسل پرینت تمام صفحه بگیریم</i></div><div class="c" style="left:366px;top:454px;width:240px;"><i>چگونه در اکسل پرینت تمام صفحه بگیریم</i></div><div class="c" style="left:366px;top:629px;width:240px;"><i>چگونه در اکسل پرینت تمام صفحه بگیریم</i></div><div class="c" style="left:526px;top:304px;width:80px;"><i>نام</i></div><div class="c" style="left:446px;top:304px;width:80px;"><i>نام خانوادگی</i></div><div class="c" style="left:366px;top:304px;width:80px;"><i>نمره</i></div><div class="c" style="left:526px;top:479px;width:80px;"><i>نام</i></div><div class="c" style="left:446px;top:479px;width:80px;"><i>نام خانوادگی</i></div><div class="c" style="left:366px;top:479px;width:80px;"><i>نمره</i></div><div class="c" style="left:526px;top:654px;width:80px;"><i>نام</i></div><div class="c" style="left:446px;top:654px;width:80px;"><i>نام خانوادگی</i></div><div class="c" style="left:366px;top:654px;width:80px;"><i>نمره</i></div><div class="c" style="left:526px;top:329px;width:80px;"><i>زهرا</i></div><div class="c" style="left:446px;top:329px;width:80px;"><i>صدر</i></div><div class="c" style="left:526px;top:504px;width:80px;"><i>زهرا</i></div><div class="c" style="left:446px;top:504px;width:80px;"><i>صدر</i></div><div class="c" style="left:366px;top:329px;width:80px;"><i>19</i></div><div class="c" style="left:366px;top:504px;width:80px;"><i>10.9</i></div><div class="c" style="left:526px;top:354px;width:80px;"><i>مریم</i></div><div class="c" style="left:446px;top:354px;width:80px;"><i>آقایی</i></div><div class="c" style="left:526px;top:529px;width:80px;"><i>مریم</i></div><div class="c" style="left:446px;top:529px;width:80px;"><i>آقایی</i></div><div class="c" style="left:366px;top:354px;width:80px;"><i>20</i></div><div class="c" style="left:366px;top:529px;width:80px;"><i>9</i></div><div class="c" style="left:526px;top:379px;width:80px;"><i>سارا</i></div><div class="c" style="left:446px;top:379px;width:80px;"><i>علیپور</i></div><div class="c" style="left:526px;top:554px;width:80px;"><i>سارا</i></div><div class="c" style="left:446px;top:554px;width:80px;"><i>علیپور</i></div><div class="c" style="left:366px;top:379px;width:80px;"><i>17</i></div><div class="c" style="left:366px;top:554px;width:80px;"><i>7.1</i></div><div class="c" style="left:526px;top:404px;width:80px;"><i>مژگان</i></div><div class="c" style="left:446px;top:404px;width:80px;"><i>رضایی</i></div><div class="c" style="left:526px;top:579px;width:80px;"><i>مژگان</i></div><div class="c" style="left:446px;top:579px;width:80px;"><i>رضایی</i></div><div class="c" style="left:366px;top:404px;width:80px;"><i>15</i></div><div class="c" style="left:366px;top:579px;width:80px;"><i>5.2</i></div><div class="c" style="left:526px;top:429px;width:80px;"><i>محبوبه</i></div><div class="c" style="left:446px;top:429px;width:80px;"><i>محمدی</i></div><div class="c" style="left:526px;top:604px;width:80px;"><i>محبوبه</i></div><div class="c" style="left:446px;top:604px;width:80px;"><i>محمدی</i></div><div class="c" style="left:366px;top:429px;width:80px;"><i>12</i></div><div class="c" style="left:366px;top:604px;width:80px;"><i>3.3</i></div><div class="c" style="left:526px;top:679px;width:80px;"><i>زهرا</i></div><div class="c" style="left:446px;top:679px;width:80px;"><i>صدر</i></div><div class="c" style="left:366px;top:679px;width:80px;"><i><span dir="ltr">1.4</span></i></div><div class="c" style="left:526px;top:704px;width:80px;"><i>مریم</i></div><div class="c" style="left:446px;top:704px;width:80px;"><i>آقایی</i></div><div class="c" style="left:366px;top:704px;width:80px;"><i><span dir="ltr">-0.5</span></i></div><div class="c tt" style="left:25px;top:279px;width:341px"><i>چگونه در اکسل پرینت تمام صفحه بگیریم</i></div><div class="c tt" style="left:25px;top:454px;width:341px"><i>چگونه در اکسل پرینت تمام صفحه بگیریم</i></div><div class="c tt" style="left:25px;top:629px;width:341px"><i>چگونه در اکسل پرینت تمام صفحه بگیریم</i></div><div class="c" style="left:286px;top:304px;width:80px;"><i>نام</i></div><div class="c" style="left:206px;top:304px;width:80px;"><i>نام خانوادگی</i></div><div class="c" style="left:286px;top:479px;width:80px;"><i>نام</i></div><div class="c" style="left:206px;top:479px;width:80px;"><i>نام خانوادگی</i></div><div class="c" style="left:286px;top:654px;width:80px;"><i>نام</i></div><div class="c" style="left:206px;top:654px;width:80px;"><i>نام خانوادگی</i></div><div class="c" style="left:286px;top:329px;width:80px;"><i>زهرا</i></div><div class="c" style="left:206px;top:329px;width:80px;"><i>صدر</i></div><div class="c" style="left:286px;top:504px;width:80px;"><i>زهرا</i></div><div class="c" style="left:206px;top:504px;width:80px;"><i>صدر</i></div><div class="c" style="left:286px;top:354px;width:80px;"><i>مریم</i></div><div class="c" style="left:206px;top:354px;width:80px;"><i>آقایی</i></div><div class="c" style="left:286px;top:529px;width:80px;"><i>مریم</i></div><div class="c" style="left:206px;top:529px;width:80px;"><i>آقایی</i></div><div class="c" style="left:286px;top:379px;width:80px;"><i>سارا</i></div><div class="c" style="left:206px;top:379px;width:80px;"><i>علیپور</i></div><div class="c" style="left:286px;top:554px;width:80px;"><i>سارا</i></div><div class="c" style="left:206px;top:554px;width:80px;"><i>علیپور</i></div><div class="c" style="left:286px;top:404px;width:80px;"><i>مژگان</i></div><div class="c" style="left:206px;top:404px;width:80px;"><i>رضایی</i></div><div class="c" style="left:286px;top:579px;width:80px;"><i>مژگان</i></div><div class="c" style="left:206px;top:579px;width:80px;"><i>رضایی</i></div><div class="c" style="left:286px;top:429px;width:80px;"><i>محبوبه</i></div><div class="c" style="left:206px;top:429px;width:80px;"><i>محمدی</i></div><div class="c" style="left:286px;top:604px;width:80px;"><i>محبوبه</i></div><div class="c" style="left:206px;top:604px;width:80px;"><i>محمدی</i></div><div class="c" style="left:286px;top:679px;width:80px;"><i>زهرا</i></div><div class="c" style="left:206px;top:679px;width:80px;"><i>صدر</i></div><div class="c" style="left:286px;top:704px;width:80px;"><i>مریم</i></div><div class="c" style="left:206px;top:704px;width:80px;"><i>آقایی</i></div>
<div class="a" style="left:1165px;top:728px;width:82px;height:27px;border:2px solid #107c41"></div>
<div class="a" style="left:725px;top:98px;width:545px;height:564px;border-radius:8px;box-shadow:0 12px 40px rgba(0,0,0,0.65),0 4px 10px rgba(0,0,0,0.35)"></div>
<div class="a" style="left:725px;top:98px;width:545px;height:564px;border-radius:8px;background:#f0f0f0;overflow:hidden"><div class="a" style="left:0;top:0;width:545px;height:38px;background:#fff"></div><div class="a" style="left:10px;top:77px;width:523px;height:436px;background:#f9f9f9;border:1px solid #ebebeb"></div><div class="a" style="left:11px;top:48px;width:64px;height:31px;background:#f9f9f9;border:1px solid #ebebeb;border-bottom:none"></div><div class="a" style="left:75px;top:50px;width:252px;height:27px;background:#ececec;border-top:1px solid #e4e4e4"></div><div class="a" style="left:150px;top:52px;width:1px;height:24px;background:#e0e0e0"></div><div class="a" style="left:265px;top:52px;width:1px;height:24px;background:#e0e0e0"></div></div>
<div class="t" style="left:735.5px;top:109.3px;font-size:15px;color:#1a1a1a;transform-origin:0 0;transform:scaleX(0.931);white-space:pre;">Page Setup</div>
<svg class="a" style="left:1170px;top:100px" width="90" height="36"><path d="M63.5 9.5l13 13M76.5 9.5l-13 13" stroke="#222" stroke-width="1.3"/></svg>
<div class="t" style="left:1178px;top:109.3px;font-size:15px;color:#222;transform-origin:0 0;transform:scaleX(1.199);white-space:pre;">?</div>
<div class="t" style="left:750.3px;top:153.1px;font-size:14px;color:#333;transform-origin:0 0;transform:scaleX(0.939);white-space:pre;">Page</div>
<div class="t" style="left:811.3px;top:153.1px;font-size:14px;color:#333;transform-origin:0 0;transform:scaleX(1.042);white-space:pre;">Margins</div>
<div class="t" style="left:886.5px;top:153.1px;font-size:14px;color:#333;transform-origin:0 0;transform:scaleX(1.036);white-space:pre;">Header/Footer</div>
<div class="t" style="left:1005px;top:153.1px;font-size:14px;color:#333;transform-origin:0 0;transform:scaleX(0.984);white-space:pre;">Sheet</div>
<div class="t" style="left:744.4px;top:184.7px;font-size:14px;color:#333;transform-origin:0 0;transform:scaleX(1.078);white-space:pre;">Orientation</div>
<div class="a" style="left:823px;top:191px;width:427px;height:1px;background:#dedede"></div>
<svg class="a" style="left:750px;top:200px" width="260" height="55" viewBox="750 200 260 55"><path d="M759 208.5h24l7 7v31h-31z" fill="#fff" stroke="#111" stroke-width="1.5"/><path d="M783 208.5v7h7" fill="none" stroke="#111" stroke-width="1.2"/><text x="761.5" y="237.5" font-family="Liberation Serif" font-weight="bold" font-size="29" fill="#111">A</text><path d="M925 213.5h33l6 6v22h-39z" fill="#fff" stroke="#111" stroke-width="1.5"/><path d="M958 213.5v6h6" fill="none" stroke="#111" stroke-width="1.2"/><text x="930" y="236.5" font-family="Liberation Serif" font-weight="bold" font-size="29" fill="#111">A</text><circle cx="827" cy="217.5" r="5.7" fill="#fff" stroke="#0f5fc0" stroke-width="4.6"/><circle cx="996.5" cy="218" r="7.5" fill="#fff" stroke="#888" stroke-width="1.2"/><rect x="838.5" y="209.5" width="51" height="19" fill="none" stroke="#222" stroke-width="1" stroke-dasharray="1 1" shape-rendering="crispEdges"/></svg>
<div class="t" style="left:840.2px;top:211.5px;font-size:14px;color:#1e1e1e;transform-origin:0 0;transform:scaleX(1.046);white-space:pre;">Portrait</div>
<div class="t" style="left:1009.5px;top:211.5px;font-size:14px;color:#1e1e1e;transform-origin:0 0;transform:scaleX(0.985);white-space:pre;">Landscape</div>
<div class="t" style="left:744px;top:272.8px;font-size:14px;color:#333;transform-origin:0 0;transform:scaleX(1.002);white-space:pre;">Scaling</div>
<div class="a" style="left:797px;top:279px;width:453px;height:1px;background:#dedede"></div>
<svg class="a" style="left:750px;top:290px" width="400" height="65" viewBox="750 290 400 65"><circle cx="762.8" cy="308.2" r="5.7" fill="#fff" stroke="#0f5fc0" stroke-width="4.6"/><circle cx="762.8" cy="337.4" r="7.5" fill="#ededed" stroke="#999" stroke-width="1.4"/><rect x="854.5" y="297.5" width="57" height="23" fill="#fff" stroke="#c8c8c8"/><rect x="891.5" y="298.5" width="19" height="21" fill="#f3f3f3"/><path d="M897.5 307l3.5-4 3.5 4zM897.5 312l3.5 4 3.5-4z" fill="#333"/><rect x="854.5" y="326.5" width="72" height="23" fill="#f3f3f3" stroke="#dadada"/><rect x="906.5" y="327.5" width="19" height="21" fill="#ececec"/><path d="M912.5 336l3.5-4 3.5 4zM912.5 341l3.5 4 3.5-4z" fill="#666"/><rect x="1042.5" y="326.5" width="73" height="23" fill="#f3f3f3" stroke="#dadada"/><rect x="1095.5" y="327.5" width="19" height="21" fill="#ececec"/><path d="M1101.5 336l3.5-4 3.5 4zM1101.5 341l3.5 4 3.5-4z" fill="#666"/><path d="M810.5 330.5v16l4-3.5 3 6 2.2-1-3-6h5.3z" fill="#fff" stroke="#000" stroke-width="1"/></svg>
<div class="t" style="left:776px;top:302.1px;font-size:14px;color:#1e1e1e;transform-origin:0 0;transform:scaleX(1.073);white-space:pre;">Adjust to:</div>
<div class="t" style="left:860px;top:302.1px;font-size:14px;color:#1e1e1e;transform-origin:0 0;transform:scaleX(0.899);white-space:pre;">100</div>
<div class="t" style="left:915.4px;top:302.1px;font-size:14px;color:#1e1e1e;transform-origin:0 0;transform:scaleX(1.002);white-space:pre;">% normal size</div>
<div class="t" style="left:776px;top:331.1px;font-size:14px;color:#1e1e1e;transform-origin:0 0;transform:scaleX(1.057);white-space:pre;">Fit to:</div>
<div class="t" style="left:860px;top:331.1px;font-size:14px;color:#9a9a9a;transform-origin:0 0;transform:scaleX(0.771);white-space:pre;">1</div>
<div class="t" style="left:931.6px;top:331.1px;font-size:14px;color:#1e1e1e;transform-origin:0 0;transform:scaleX(1.012);white-space:pre;">page(s) wide by</div>
<div class="t" style="left:1048px;top:331.1px;font-size:14px;color:#9a9a9a;transform-origin:0 0;transform:scaleX(0.771);white-space:pre;">1</div>
<div class="t" style="left:1120px;top:331.1px;font-size:14px;color:#1e1e1e;transform-origin:0 0;transform:scaleX(1.118);white-space:pre;">tall</div>
<div class="a" style="left:744px;top:369px;width:506px;height:1px;background:#dedede"></div>
<div class="t" style="left:744px;top:392.4px;font-size:14px;color:#1e1e1e;transform-origin:0 0;transform:scaleX(0.948);white-space:pre;">Paper size:</div>
<div class="t" style="left:744px;top:423.8px;font-size:14px;color:#1e1e1e;transform-origin:0 0;transform:scaleX(1.038);white-space:pre;">Print quality:</div>
<div class="a" style="left:836.3px;top:386.6px;width:414px;height:26px;background:#fff;border:1px solid #c4c4c4"></div>
<div class="a" style="left:1228px;top:387.6px;width:21px;height:24px;background:#fff;border-left:1px solid #dcdcdc"></div>
<svg class="a" style="left:1230px;top:391.6px" width="18" height="16"><path d="M4 6l5 5 5-5" fill="none" stroke="#666" stroke-width="1.2"/></svg>
<div class="a" style="left:836.3px;top:418px;width:414px;height:26px;background:#fff;border:1px solid #c4c4c4"></div>
<div class="a" style="left:1228px;top:419px;width:21px;height:24px;background:#fff;border-left:1px solid #dcdcdc"></div>
<svg class="a" style="left:1230px;top:423px" width="18" height="16"><path d="M4 6l5 5 5-5" fill="none" stroke="#666" stroke-width="1.2"/></svg>
<div class="t" style="left:841px;top:392.4px;font-size:14px;color:#1e1e1e;transform-origin:0 0;transform:scaleX(1.089);white-space:pre;">Letter</div>
<div class="t" style="left:841px;top:423.8px;font-size:14px;color:#1e1e1e;transform-origin:0 0;transform:scaleX(1.023);white-space:pre;">600 dpi</div>
<div class="t" style="left:744px;top:463.1px;font-size:14px;color:#1e1e1e;transform-origin:0 0;transform:scaleX(1.021);white-space:pre;">First page number:</div>
<div class="a" style="left:876.5px;top:458.6px;width:52px;height:24.5px;background:#fff;border:1px solid #c8c8c8"></div>
<div class="t" style="left:882px;top:463.1px;font-size:14px;color:#1e1e1e;transform-origin:0 0;transform:scaleX(1.042);white-space:pre;">Auto</div>
<div class="a" style="left:937px;top:574px;width:90.5px;height:27px;background:#fdfdfd;border:1px solid #d0d0d0;border-bottom-color:#bdbdbd;border-radius:4px"></div>
<div class="t" style="left:961px;top:581.1px;font-size:14px;color:#1e1e1e;transform-origin:0 0;transform:scaleX(1.013);white-space:pre;">Print...</div>
<div class="a" style="left:1041px;top:574px;width:103.5px;height:27px;background:#fdfdfd;border:1px solid #d0d0d0;border-bottom-color:#bdbdbd;border-radius:4px"></div>
<div class="t" style="left:1052px;top:581.1px;font-size:14px;color:#1e1e1e;transform-origin:0 0;transform:scaleX(0.994);white-space:pre;">Print Preview</div>
<div class="a" style="left:1157.4px;top:574px;width:91.59999999999991px;height:27px;background:#fdfdfd;border:1px solid #d0d0d0;border-bottom-color:#bdbdbd;border-radius:4px"></div>
<div class="t" style="left:1171px;top:581.1px;font-size:14px;color:#1e1e1e;transform-origin:0 0;transform:scaleX(1.068);white-space:pre;">Options...</div>
<div class="a" style="left:1064px;top:624.7px;width:91.6px;height:27px;background:#fdfdfd;border:2px solid #2a7ad0;border-radius:4px"></div>
<div class="t" style="left:1101px;top:631.1px;font-size:14px;color:#1e1e1e;transform-origin:0 0;transform:scaleX(0.840);white-space:pre;">OK</div>
<div class="a" style="left:1169px;top:624.7px;width:90.7px;height:27px;background:#fdfdfd;border:1px solid #d0d0d0;border-bottom-color:#bdbdbd;border-radius:4px"></div>
<div class="t" style="left:1194px;top:631.1px;font-size:14px;color:#1e1e1e;transform-origin:0 0;transform:scaleX(0.964);white-space:pre;">Cancel</div>
<svg class="a" style="left:1425px;top:708px" width="145" height="76" viewBox="1425 708 145 76">
<path d="M1434.5 769.5v-37a4 4 0 0 1 4-4h52a4 4 0 0 1 4 4v37z" fill="#f6d21e" stroke="#111" stroke-width="1.6"/>
<path d="M1441 742l35-7 8 36h-32z" fill="#fff" opacity="0.9"/>
<g transform="rotate(-14 1470 740)">
<rect x="1462" y="720" width="20" height="40" fill="#5bc0eb" stroke="#111" stroke-width="0.8"/>
<rect x="1466" y="728" width="12" height="5" fill="#fff"/>
</g>
<g transform="rotate(-18 1455 740)">
<rect x="1441" y="716" width="30" height="38" fill="#e8197a" stroke="#111" stroke-width="0.8"/>
<rect x="1441" y="716" width="6" height="38" fill="#9a9a9a" stroke="#111" stroke-width="0.8"/>
<rect x="1452" y="724" width="13" height="6" fill="#fff"/>
<path d="M1447 754h24v10h-24z" fill="#fff" stroke="#111" stroke-width="0.8"/>
<path d="M1449 757.5h20M1449 760.5h20" stroke="#333" stroke-width="0.6"/>
</g>
<path d="M1430 770.5h67.5a3 3 0 0 1-3 7h-61.5a3 3 0 0 1-3-7z" fill="#dcdce2" stroke="#111" stroke-width="1.6"/>
<path d="M1458 770.5h12v2h-12z" fill="#111"/>
<path d="M1433 779h62" stroke="#444" stroke-width="1.5" opacity="0.6"/>
<text x="1500" y="754" font-family="Liberation Sans" font-weight="bold" font-size="24" fill="#f5d838" textLength="52" lengthAdjust="spacingAndGlyphs">LIGHT</text>
<text x="1501" y="769.7" font-family="Liberation Sans" font-weight="bold" font-size="16" fill="#3a3a42" textLength="64" lengthAdjust="spacingAndGlyphs">COLLEGE</text>
</svg>
<div class="a" style="left:295px;top:708px;width:1008px;height:127px;border-radius:7px;background:rgba(0,0,0,0.77)"></div>
<div class="t" style="left:300px;top:713px;width:997px;font-size:39px;line-height:56px;color:#fff;direction:rtl;text-align:right;-webkit-text-stroke:0.7px #fff;transform-origin:100% 50%;transform:scaleX(0.99)">تنظیمات مربوط به صفحه رو انجام بدیم. اولین تنظیمات مربوط</div>
<div class="t" style="left:295px;top:769px;width:1008px;font-size:38px;line-height:56px;color:#fff;direction:rtl;text-align:center;-webkit-text-stroke:0.7px #fff;transform:translateX(8px)">به افقی و عمودی بودن صفحه هست.</div>
</body></html>
